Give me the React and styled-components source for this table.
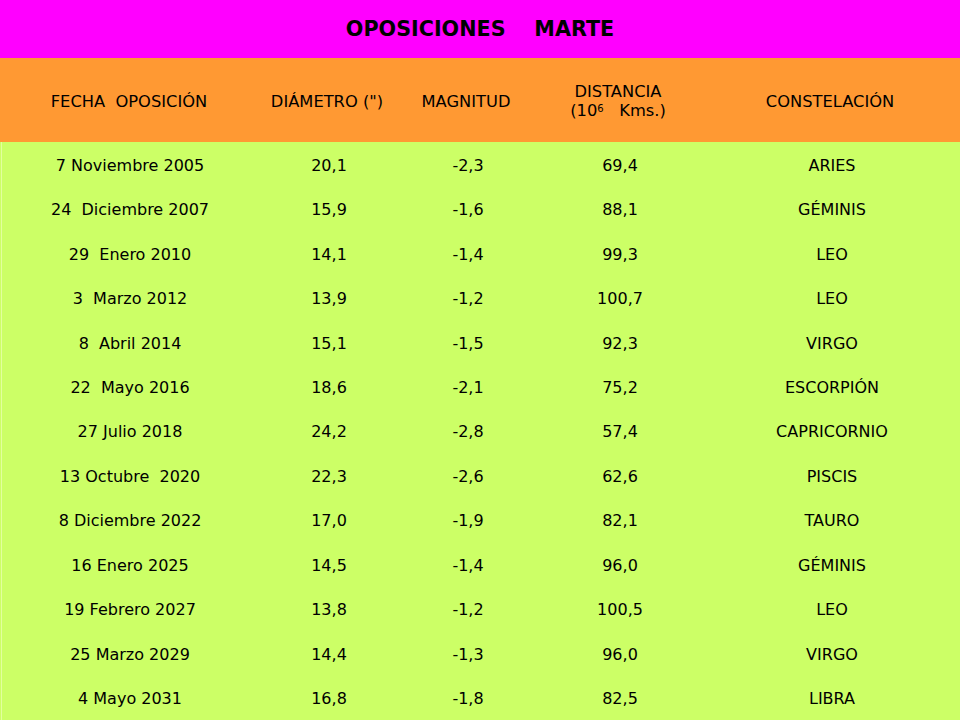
import React from "react";
import styled, { createGlobalStyle } from "styled-components";

const Global = createGlobalStyle`
  html, body { margin: 0; padding: 0; background: #ccff66; }
  body { font-family: "DejaVu Sans", Verdana, sans-serif; color: #000; }
`;

const Page = styled.div`
  width: 960px;
  height: 720px;
  display: flex;
  flex-direction: column;
  overflow: hidden;
`;

const TitleBar = styled.div`
  height: 58px;
  background: #ff00ff;
  display: flex;
  align-items: center;
  justify-content: center;
`;

const Title = styled.h1`
  margin: 0;
  font-size: 20.7px;
  font-weight: bold;
  white-space: pre;
  color: #000;
`;

const cols = "258px 138px 140px 164px 260px";

const HeaderRow = styled.div`
  height: 84px;
  background: #ff9933;
  display: grid;
  grid-template-columns: ${cols};
  align-items: center;
`;

const HeadCell = styled.div`
  text-align: center;
  font-size: 16.3px;
  line-height: 19px;
  white-space: pre;
  padding-top: 2px;
`;

const HeadLine = styled.div`
  line-height: 19px;
  height: 19px;
`;

const Sup = styled.span`
  display: inline-block;
  font-size: 10px;
  line-height: 10px;
  vertical-align: top;
  margin-top: 3px;
`;

const Body = styled.div`
  flex: 1;
  background: #ccff66;
  display: grid;
  grid-template-columns: ${cols};
  grid-auto-rows: 1fr;
  align-items: center;
  border-left: 1px solid #e2ff9e;
  margin-left: 1px;
`;

const Cell = styled.div`
  text-align: center;
  font-size: 16px;
  white-space: pre;
  padding-top: 2px;
  margin-left: ${(p) => (p.$first ? "-2px" : "0")};
`;

const rows = [
  ["7 Noviembre 2005", "20,1", "-2,3", "69,4", "ARIES"],
  ["24  Diciembre 2007", "15,9", "-1,6", "88,1", "GÉMINIS"],
  ["29  Enero 2010", "14,1", "-1,4", "99,3", "LEO"],
  ["3  Marzo 2012", "13,9", "-1,2", "100,7", "LEO"],
  ["8  Abril 2014", "15,1", "-1,5", "92,3", "VIRGO"],
  ["22  Mayo 2016", "18,6", "-2,1", "75,2", "ESCORPIÓN"],
  ["27 Julio 2018", "24,2", "-2,8", "57,4", "CAPRICORNIO"],
  ["13 Octubre  2020", "22,3", "-2,6", "62,6", "PISCIS"],
  ["8 Diciembre 2022", "17,0", "-1,9", "82,1", "TAURO"],
  ["16 Enero 2025", "14,5", "-1,4", "96,0", "GÉMINIS"],
  ["19 Febrero 2027", "13,8", "-1,2", "100,5", "LEO"],
  ["25 Marzo 2029", "14,4", "-1,3", "96,0", "VIRGO"],
  ["4 Mayo 2031", "16,8", "-1,8", "82,5", "LIBRA"],
];

export default function App() {
  return (
    <Page>
      <Global />
      <TitleBar>
        <Title>{"OPOSICIONES    MARTE"}</Title>
      </TitleBar>
      <HeaderRow>
        <HeadCell>{"FECHA  OPOSICIÓN"}</HeadCell>
        <HeadCell>{'DIÁMETRO (")'}</HeadCell>
        <HeadCell>MAGNITUD</HeadCell>
        <HeadCell>
          <HeadLine>DISTANCIA</HeadLine>
          <HeadLine>
            {"(10"}
            <Sup>6</Sup>
            {"   Kms.)"}
          </HeadLine>
        </HeadCell>
        <HeadCell>CONSTELACIÓN</HeadCell>
      </HeaderRow>
      <Body>
        {rows.map((r, i) =>
          r.map((c, j) => (
            <Cell key={`${i}-${j}`} $first={j === 0}>
              {c}
            </Cell>
          ))
        )}
      </Body>
    </Page>
  );
}
